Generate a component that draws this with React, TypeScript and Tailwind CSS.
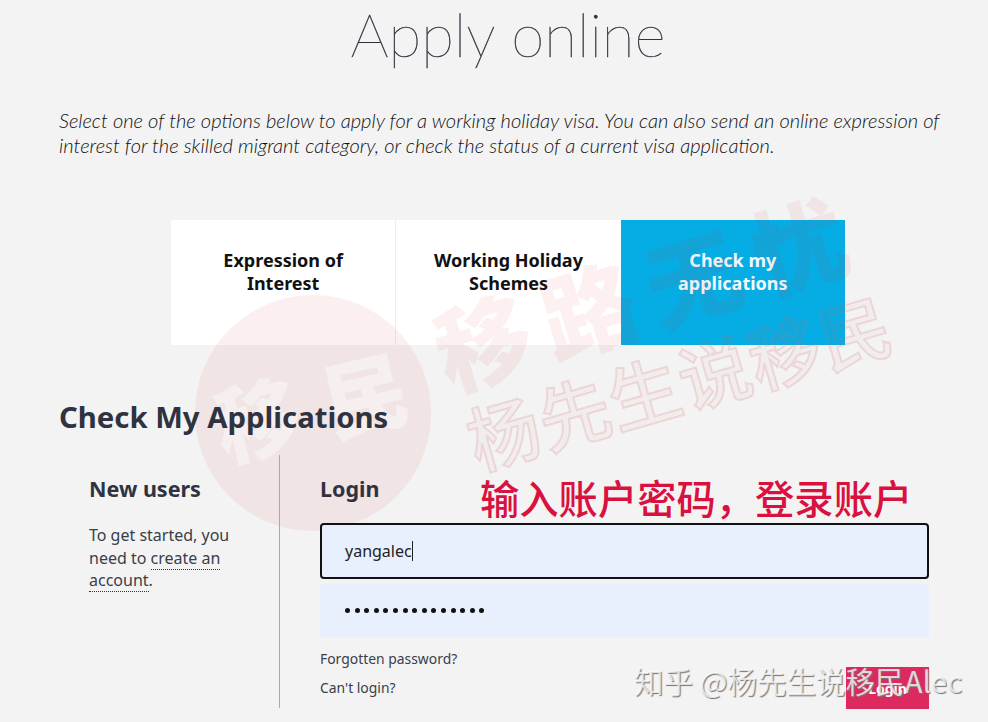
const sans = "font-['Noto_Sans','Noto_Sans_CJK_SC',sans-serif]"

const options = [
  { label: ["Expression of", "Interest"], active: false },
  { label: ["Working Holiday", "Schemes"], active: false },
  { label: ["Check my", "applications"], active: true },
]

function Watermarks() {
  return (
    <div className="absolute inset-0 overflow-hidden pointer-events-none font-['Noto_Sans_CJK_SC',sans-serif]">
      {/* round stamp */}
      <div className="absolute left-[195px] top-[295px] w-[236px] h-[236px] rounded-full bg-[#d9303c]/[0.08] flex items-center justify-center">
        <span className="pl-[26px] pb-[22px] text-[85px] leading-none font-black text-[#f6f4f4]/70 -rotate-[13deg] tracking-[26px] whitespace-nowrap">移民</span>
      </div>
      <div className="absolute left-[427px] top-[240px] text-[95px] leading-none font-black text-[#e0303c]/[0.07] -rotate-[17deg] whitespace-nowrap tracking-[15px]">
        移路无忧
      </div>
      <div className="absolute left-[460px] top-[344px] text-[72px] leading-none font-medium text-[#e0303c]/[0.03] [-webkit-text-stroke:2px_rgba(215,110,110,0.2)] -rotate-[16deg] whitespace-nowrap tracking-[1px]">
        杨先生说移民
      </div>
    </div>
  )
}

export default function App() {
  return (
    <div className={`relative w-[988px] h-[722px] overflow-hidden bg-[#f3f3f3] text-[#343844] ${sans}`}>
      <h1 className="pt-[1px] text-center text-[60px] leading-[66px] font-['Lato',sans-serif] font-thin text-[#2f3340] pl-[28px] [-webkit-text-stroke:0.4px_#2f3340]">
        Apply online
      </h1>

      <p className="mt-[41px] mx-[59px] text-[20.1px] leading-[25px] italic font-['Lato',sans-serif] font-light text-[#111] whitespace-nowrap">
        Select one of the options below to apply for a working holiday visa. You can also send an online expression of
        <br />
        interest for the skilled migrant category, or check the status of a current visa application.
      </p>

      <div className="mt-[62px] ml-[171px] w-[674px] h-[125px] flex">
        {options.map((o, i) => (
          <div
            key={i}
            className={`flex-1 pt-[29px] text-center text-[18px] leading-[23px] font-bold ${
              o.active ? "bg-[#05ade4] text-[#f2fbff]" : "bg-white text-[#111]"
            } ${i === 0 ? "border-r border-[#eeeeee]" : ""}`}
          >
            {o.label[0]}
            <br />
            {o.label[1]}
          </div>
        ))}
      </div>

      <h2 className="relative z-10 mt-[52px] ml-[59px] text-[29.3px] leading-[40px] font-bold text-[#2f3340]">Check My Applications</h2>

      <div className="relative z-10 mt-[18px] ml-[89px] flex">
        <div className="w-[191px] h-[253px] border-r border-[#a9a9a9] pt-[19px] pr-[40px]">
          <h3 className="text-[21.5px] leading-[30px] font-bold text-[#2f3340]">New users</h3>
          <p className="mt-[20px] text-[16px] leading-[22.5px] text-[#3a3e49] w-[160px]">
            To get started, you need to{" "}
            <span className="border-b border-dotted border-[#333]">create an account</span>.
          </p>
        </div>
        <div className="ml-[40px] w-[609px] pt-[19px]">
          <h3 className="text-[21.5px] leading-[30px] font-bold text-[#2f3340]">Login</h3>
          <div className="mt-[19px] h-[56px] rounded-[4px] border-2 border-[#111] bg-[#e8f0fe] pl-[23px] flex items-center text-[16px] text-[#222]">
            yangalec
            <span className="w-px h-[20px] bg-[#222]" />
          </div>
          <div className="mt-[5px] h-[53px] bg-[#e8f0fe] pl-[25px] flex items-center gap-[4.6px]">
            {Array.from({ length: 15 }).map((_, i) => (
              <span key={i} className="w-[5px] h-[5px] rounded-full bg-[#111]" />
            ))}
          </div>
          <div className="flex justify-between">
            <div className="text-[13.9px] text-[#3a3e49]">
              <div className="mt-[13px] leading-[18px]">Forgotten password?</div>
              <div className="mt-[11px] leading-[18px]">Can't login?</div>
            </div>
            <div className="mt-[30px] w-[83px] h-[42px] bg-[#dc2a5f] text-white text-[14px] font-bold flex items-center justify-center">
              Login
            </div>
          </div>
        </div>
      </div>

      <Watermarks />

      <div className="absolute left-[480px] top-[472px] z-20 text-[39.3px] leading-[50px] font-medium text-[#d9113f] whitespace-nowrap font-['Noto_Sans_CJK_SC',sans-serif]">
        输入账户密码，登录账户
      </div>
      <div className="absolute left-[634px] top-[660px] z-20 text-[29.5px] leading-[40px] text-white/75 [text-shadow:1px_1px_1px_#777] whitespace-nowrap font-['Noto_Sans_CJK_SC',sans-serif]">
        知乎 @杨先生说移民Alec
      </div>
    </div>
  )
}
